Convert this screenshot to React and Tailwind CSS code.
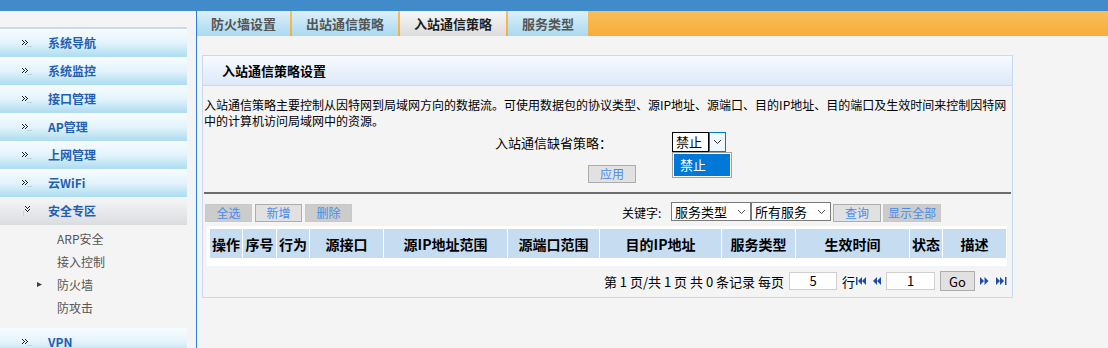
import React from 'react';

const menuTop = ['系统导航', '系统监控', '接口管理', 'AP管理', '上网管理', '云WiFi'];
const subItems = ['ARP安全', '接入控制', '防火墙', '防攻击'];
const tabs = [
  { label: '防火墙设置', w: 'w-[93px]' },
  { label: '出站通信策略', w: 'w-[106px]' },
  { label: '入站通信策略', w: 'w-[106px]', active: true },
  { label: '服务类型', w: 'w-[80px]' },
];
const columns = [
  { label: '操作', w: 'w-[32px]' },
  { label: '序号', w: 'w-[33px]' },
  { label: '行为', w: 'w-[32px]' },
  { label: '源接口', w: 'w-[73px]' },
  { label: '源IP地址范围', w: 'w-[123px]' },
  { label: '源端口范围', w: 'w-[91px]' },
  { label: '目的IP地址', w: 'w-[121px]' },
  { label: '服务类型', w: 'w-[73px]' },
  { label: '生效时间', w: 'w-[113px]' },
  { label: '状态', w: 'w-[32px]' },
  { label: '描述', w: 'w-[63px]' },
];

// dotted double-chevron used in the side menu
function MenuArrow({ down }) {
  const dots = [
    [0, 1], [1, 2], [2, 3], [1, 4], [0, 5],
    [3, 1], [4, 2], [5, 3], [4, 4], [3, 5],
  ];
  return (
    <svg width="10" height="8" viewBox="0 0 10 8" className={down ? 'rotate-90' : ''}>
      {dots.map(([x, y], i) => (
        <rect key={i} x={x} y={y} width="1" height="1" fill="#1d1d2a" />
      ))}
      <rect x="5" y="7" width="5" height="1" fill="#c4d0dc" />
    </svg>
  );
}

function MenuItem({ label }) {
  return (
    <div className="w-[187px] h-[28px] flex items-center bg-gradient-to-b from-[#f8fcfe] via-[#e3f3fb] to-[#acdcf1]">
      <span className="ml-[22px] w-[26px] flex">
        <MenuArrow />
      </span>
      <span className="text-[12px] leading-[16px] font-bold text-[#1f5fb3]">{label}</span>
    </div>
  );
}

function GrayBtn({ label, light, w = 'w-[47px]' }) {
  return (
    <button
      className={`${w} h-[18px] text-[12px] leading-[16px] text-[#4a8bf0] border ${
        light ? 'bg-[#e1e1e1] border-[#adadad]' : 'bg-[#cccccc] border-[#c8c8c8]'
      }`}
    >
      {label}
    </button>
  );
}

function Select({ value }) {
  return (
    <div className="w-[80px] h-[19px] border border-[#7a7a7a] bg-white flex items-center justify-between pl-[3px] pr-[4px]">
      <span className="text-[13px] leading-[17px] text-black">{value}</span>
      <svg width="9" height="6" viewBox="0 0 9 6">
        <path d="M1 1 L4.5 4.5 L8 1" stroke="#555" strokeWidth="1" fill="none" />
      </svg>
    </div>
  );
}

function PageIcon({ kind }) {
  const c = '#1c4ea8';
  if (kind === 'first')
    return (
      <svg width="10" height="8" viewBox="0 0 10 8">
        <rect x="0" y="0" width="1.5" height="8" fill={c} />
        <path d="M6 0 L2 4 L6 8 Z M10 0 L6 4 L10 8 Z" fill={c} />
      </svg>
    );
  if (kind === 'prev')
    return (
      <svg width="8" height="8" viewBox="0 0 8 8">
        <path d="M4 0 L0 4 L4 8 Z M8 0 L4 4 L8 8 Z" fill={c} />
      </svg>
    );
  if (kind === 'next')
    return (
      <svg width="9" height="8" viewBox="0 0 9 8">
        <path d="M0 0 L4 4 L0 8 Z M4.5 0 L8.5 4 L4.5 8 Z" fill={c} />
      </svg>
    );
  return (
    <svg width="11" height="8" viewBox="0 0 11 8">
      <path d="M0 0 L4 4 L0 8 Z M4 0 L8 4 L4 8 Z" fill={c} />
      <rect x="9" y="0" width="1.5" height="8" fill={c} />
    </svg>
  );
}

export default function App() {
  return (
    <div className="w-[1108px] h-[348px] overflow-hidden bg-[#f4f4f4] font-['Noto_Sans_CJK_SC',sans-serif] text-black">
      {/* top bar */}
      <div className="h-[11px] bg-[#428bca]" />

      <div className="flex">
        {/* side menu */}
        <aside className="w-[196px] shrink-0">
          <div className="h-[16px]" />
          <div className="w-[187px] h-[2px] bg-[#c8dcef]" />
          {menuTop.map((m) => (
            <MenuItem key={m} label={m} />
          ))}
          <div className="w-[187px] h-[28px] flex items-center bg-gradient-to-b from-[#f5f6f7] to-[#dadde0]">
            <span className="ml-[22px] w-[26px] flex">
              <MenuArrow down />
            </span>
            <span className="text-[12px] leading-[16px] font-bold text-[#1f5fb3]">安全专区</span>
          </div>
          <div className="pt-[2px] pb-[9px]">
            {subItems.map((s) => (
              <div key={s} className="h-[23px] flex items-center">
                <span className="w-[57px] flex justify-end pr-[15px]">
                  {s === '防火墙' && (
                    <svg width="5" height="5" viewBox="0 0 5 5">
                      <path d="M0 0 L5 2.5 L0 5 Z" fill="#3a3f4c" />
                    </svg>
                  )}
                </span>
                <span className="text-[12px] leading-[16px] text-[#555]">{s}</span>
              </div>
            ))}
          </div>
          <MenuItem label="VPN" />
        </aside>

        {/* main */}
        <main className="flex-1 h-[337px] border-l border-[#2b7be0]">
          {/* tabs */}
          <div className="h-[25px] flex gap-[2px] bg-gradient-to-b from-[#f9bd59] to-[#f8ad38]">
            {tabs.map((t) => (
              <div
                key={t.label}
                className={`${t.w} h-[25px] flex items-center justify-center text-[13px] leading-[17px] font-bold ${
                  t.active
                    ? 'bg-gradient-to-b from-[#f7f7f7] to-[#dcdcdc] text-[#1e1e1e]'
                    : 'bg-gradient-to-b from-[#dcf0fa] to-[#a9d9ef] text-[#555]'
                }`}
              >
                {t.label}
              </div>
            ))}
          </div>

          {/* panel */}
          <section className="ml-[5px] mt-[19px] w-[811px] border border-[#c6dbef]">
            <div className="h-[30px] border-b border-[#c6dbef] bg-gradient-to-b from-[#f8faff] to-[#dce8f9] flex items-center pl-[19px]">
              <h2 className="text-[13px] leading-[17px] font-bold">入站通信策略设置</h2>
            </div>

            <div className="px-[1px]">
              <div className="mt-[11px] text-[12px] leading-[16px] whitespace-nowrap">
                <p>入站通信策略主要控制从因特网到局域网方向的数据流。可使用数据包的协议类型、源IP地址、源端口、目的IP地址、目的端口及生效时间来控制因特网</p>
                <p>中的计算机访问局域网中的资源。</p>
              </div>

              <div className="mt-[3px] h-[20px] flex items-center">
                <span className="w-[408px] text-right text-[13px] leading-[17px]">入站通信缺省策略：</span>
                <div className="relative ml-[60px] flex h-[20px]">
                  <div className="w-[37px] h-[20px] border border-black bg-white text-[13px] leading-[18px] pl-[3px]">禁止</div>
                  <div className="w-[17px] h-[20px] border border-[#0078d7] bg-[#f0f7fd] flex items-center justify-center">
                    <svg width="9" height="6" viewBox="0 0 9 6">
                      <path d="M1 1 L4.5 4.5 L8 1" stroke="#333" strokeWidth="1" fill="none" />
                    </svg>
                  </div>
                  <div className="absolute left-0 top-[20px] w-[60px] h-[26px] border border-[#a0a0a0] bg-white p-[1px]">
                    <div className="h-full bg-[#0078d7] text-white text-[13px] leading-[22px] pl-[6px]">禁止</div>
                  </div>
                </div>
              </div>

              <div className="mt-[13px] ml-[384px] flex h-[18px]">
                <GrayBtn label="应用" light w="w-[48px]" />
              </div>

              <div className="mt-[9px] h-[2px] bg-[#6c6c6c]" />

              {/* toolbar */}
              <div className="mt-[10px] h-[18px] flex items-start">
                <div className="ml-[1px] flex gap-[3px]">
                  <GrayBtn label="全选" />
                  <GrayBtn label="新增" light />
                  <GrayBtn label="删除" />
                </div>
                <div className="ml-[270px] flex items-start">
                  <span className="w-[49px] text-[12px] leading-[18px]">关键字:</span>
                  <div className="-mt-[2px] flex">
                    <Select value="服务类型" />
                    <Select value="所有服务" />
                  </div>
                  <div className="ml-[2px] flex gap-[2px]">
                    <GrayBtn label="查询" light w="w-[48px]" />
                    <GrayBtn label="显示全部" w="w-[58px]" />
                  </div>
                </div>
              </div>

              {/* table */}
              <div className="mt-[4px] ml-[3px] w-[800px] bg-white pt-[3px] pl-[3px] pb-[8px]">
                <div className="flex gap-px h-[29px]">
                  {columns.map((c) => (
                    <div
                      key={c.label}
                      className={`${c.w} shrink-0 bg-[#c6dcf0] flex items-center justify-center text-[14px] leading-[18px] font-bold whitespace-nowrap`}
                    >
                      {c.label}
                    </div>
                  ))}
                </div>
              </div>

              {/* pagination */}
              <div className="mt-[5px] mb-[6px] h-[20px] flex items-center justify-end pr-[4px] text-[13px] leading-[17px]">
                <span className="whitespace-pre">第 1 页/共 1 页 共 0 条记录 每页</span>
                <div className="ml-[5px] w-[48px] h-[18px] border border-[#cfcfcf] bg-white text-center leading-[16px]">5</div>
                <span className="ml-[5px]">行</span>
                <span className="ml-px flex"><PageIcon kind="first" /></span>
                <span className="ml-[7px] flex"><PageIcon kind="prev" /></span>
                <div className="ml-[5px] w-[49px] h-[18px] border border-[#cfcfcf] bg-white text-center leading-[16px]">1</div>
                <button className="ml-[5px] w-[35px] h-[20px] bg-[#e1e1e1] border border-[#adadad] text-[13px] leading-[17px]">Go</button>
                <span className="ml-[5px] flex"><PageIcon kind="next" /></span>
                <span className="ml-[7px] flex"><PageIcon kind="last" /></span>
              </div>
            </div>
          </section>
        </main>
      </div>
    </div>
  );
}
